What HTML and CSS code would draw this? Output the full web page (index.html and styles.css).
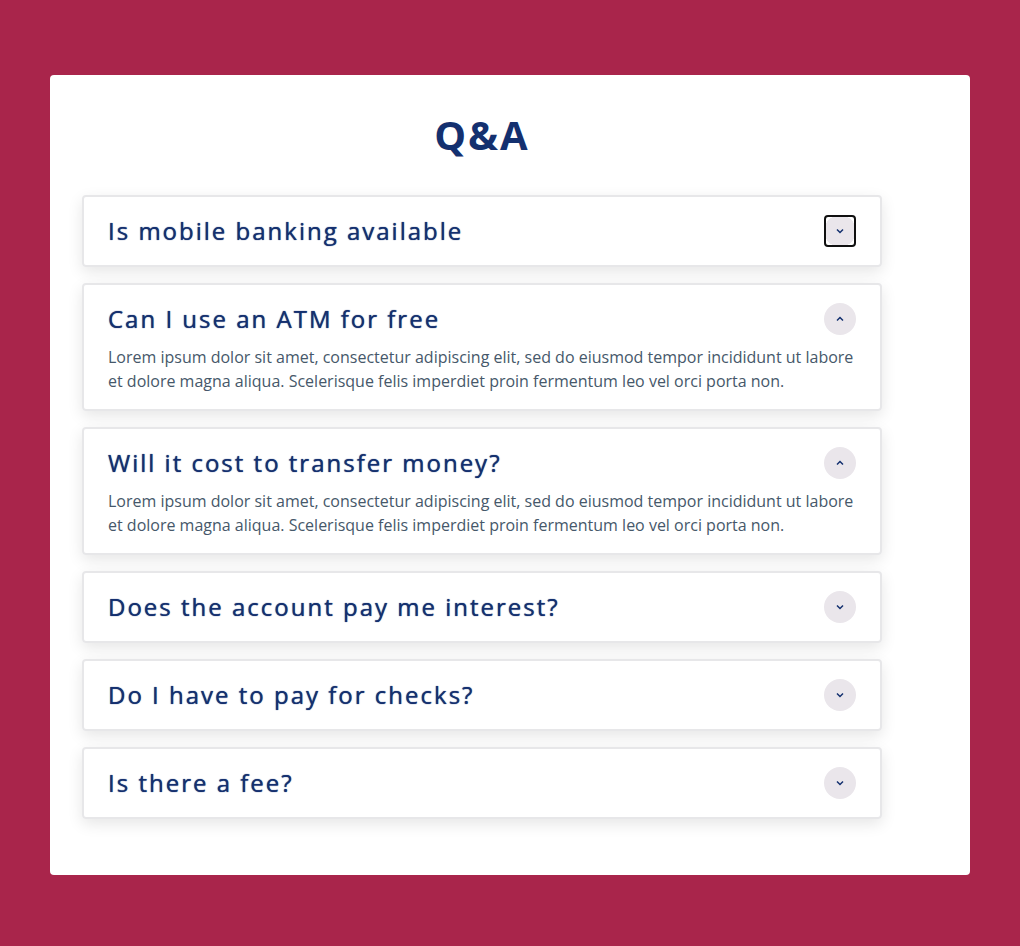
FILE: index.html
```html
<!DOCTYPE html>
<html lang="en">
<head>
<meta charset="utf-8">
<title>Q&amp;A</title>
<link rel="stylesheet" href="styles.css">
</head>
<body>
<main class="container">
  <section class="faq">
    <h1 class="title">Q&amp;A</h1>
    <article class="question">
      <header class="question-header">
        <h2 class="question-title">Is mobile banking available</h2>
        <button class="toggle toggle-focused" type="button" aria-label="Show answer" aria-expanded="false"><svg class="chevron" viewBox="0 0 24 24"><path d="M6 9l6 6 6-6"/></svg></button>
      </header>
    </article>
    <article class="question">
      <header class="question-header">
        <h2 class="question-title">Can I use an ATM for free</h2>
        <button class="toggle" type="button" aria-label="Hide answer" aria-expanded="true"><svg class="chevron" viewBox="0 0 24 24"><path d="M6 15l6-6 6 6"/></svg></button>
      </header>
      <p class="answer">Lorem ipsum dolor sit amet, consectetur adipiscing elit, sed do eiusmod tempor incididunt ut labore et dolore magna aliqua. Scelerisque felis imperdiet proin fermentum leo vel orci porta non.</p>
    </article>
    <article class="question">
      <header class="question-header">
        <h2 class="question-title">Will it cost to transfer money?</h2>
        <button class="toggle" type="button" aria-label="Hide answer" aria-expanded="true"><svg class="chevron" viewBox="0 0 24 24"><path d="M6 15l6-6 6 6"/></svg></button>
      </header>
      <p class="answer">Lorem ipsum dolor sit amet, consectetur adipiscing elit, sed do eiusmod tempor incididunt ut labore et dolore magna aliqua. Scelerisque felis imperdiet proin fermentum leo vel orci porta non.</p>
    </article>
    <article class="question">
      <header class="question-header">
        <h2 class="question-title">Does the account pay me interest?</h2>
        <button class="toggle" type="button" aria-label="Show answer" aria-expanded="false"><svg class="chevron" viewBox="0 0 24 24"><path d="M6 9l6 6 6-6"/></svg></button>
      </header>
    </article>
    <article class="question">
      <header class="question-header">
        <h2 class="question-title">Do I have to pay for checks?</h2>
        <button class="toggle" type="button" aria-label="Show answer" aria-expanded="false"><svg class="chevron" viewBox="0 0 24 24"><path d="M6 9l6 6 6-6"/></svg></button>
      </header>
    </article>
    <article class="question">
      <header class="question-header">
        <h2 class="question-title">Is there a fee?</h2>
        <button class="toggle" type="button" aria-label="Show answer" aria-expanded="false"><svg class="chevron" viewBox="0 0 24 24"><path d="M6 9l6 6 6-6"/></svg></button>
      </header>
    </article>
  </section>
</main>
</body>
</html>
```

FILE: styles.css
```css
* { box-sizing: border-box; margin: 0; padding: 0; }
body {
  min-height: 100vh;
  padding: 75px 50px 71px;
  background: #a9254b;
  font-family: "Open Sans", sans-serif;
}
.container {
  padding: 40px 32px 56px;
  background: #fff;
  border-radius: 4px;
}
.faq { max-width: 800px; }
.title {
  margin-bottom: 40px;
  color: #14306f;
  font-size: 40px;
  line-height: 40px;
  font-weight: 700;
  letter-spacing: 2px;
  text-align: center;
}
.question {
  margin-bottom: 16px;
  padding: 16px 24px;
  border: 2px solid #e7e7e9;
  border-radius: 4px;
  box-shadow: 0 5px 15px rgba(0, 0, 0, 0.1);
}
.question:last-child { margin-bottom: 0; }
.question-header {
  display: flex;
  align-items: center;
  justify-content: space-between;
  min-height: 36px;
}
.question-title {
  color: #14306f;
  font-size: 24px;
  line-height: 32px;
  font-weight: 500;
  letter-spacing: 2px;
  text-shadow: 0 0 1px currentColor;
}
.toggle {
  display: grid;
  place-items: center;
  flex-shrink: 0;
  width: 32px;
  height: 32px;
  border: 0;
  border-radius: 50%;
  background: #eae6eb;
  color: #14306f;
}
.toggle-focused {
  border: 2px solid #101010;
  border-radius: 4px;
  background: radial-gradient(closest-side, #eae6eb 98%, #fff 100%) border-box;
}
.chevron {
  width: 12px;
  height: 12px;
  fill: none;
  stroke: currentColor;
  stroke-width: 3;
}
.answer {
  margin-top: 8px;
  color: #46586a;
  font-size: 16px;
  line-height: 24px;
  font-weight: 400;
}
```
